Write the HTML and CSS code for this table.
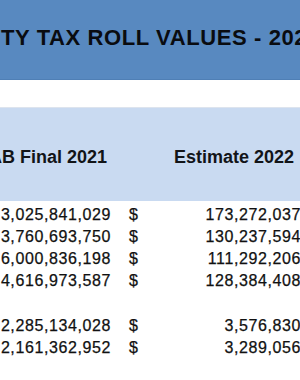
FILE: index.html
```html
<!DOCTYPE html>
<html lang="en">
<head>
<meta charset="utf-8">
<title>Tax Roll Values</title>
<link rel="stylesheet" href="styles.css">
</head>
<body>
<div class="sheet">
  <div class="title-band">
    <h1 class="title">TY TAX ROLL VALUES - 2022</h1>
  </div>
  <div class="head-band cols">
    <div class="hcell hb">AB Final 2021</div>
    <div></div>
    <div class="hcell hc">Estimate 2022</div>
  </div>
  <div class="rows">
    <div class="cols row"><span class="num">3,025,841,029</span><span class="cur">$</span><span class="num">173,272,037</span></div>
    <div class="cols row"><span class="num">3,760,693,750</span><span class="cur">$</span><span class="num">130,237,594</span></div>
    <div class="cols row"><span class="num">6,000,836,198</span><span class="cur">$</span><span class="num">111,292,206</span></div>
    <div class="cols row"><span class="num">4,616,973,587</span><span class="cur">$</span><span class="num">128,384,408</span></div>
    <div class="spacer"></div>
    <div class="cols row"><span class="num">2,285,134,028</span><span class="cur">$</span><span class="num">3,576,830</span></div>
    <div class="cols row"><span class="num">2,161,362,952</span><span class="cur">$</span><span class="num">3,289,056</span></div>
  </div>
</div>
</body>
</html>
```
FILE: styles.css
```css
html, body {
  margin: 0;
  padding: 0;
  overflow: hidden;
  background: #ffffff;
}
body {
  width: 300px;
  height: 380px;
  font-family: "Liberation Sans", Arial, sans-serif;
  color: #111111;
}
.sheet {
  width: 301px;
}
.title-band {
  height: 79px;
  background: #5889c0;
  border-bottom: 1px solid #4f7fb5;
  overflow: hidden;
  white-space: nowrap;
}
.title {
  margin: 0;
  padding: 25px 0 0 1px;
  font-size: 22px;
  line-height: 26px;
  font-weight: bold;
  letter-spacing: 0.6px;
  color: #0a0c10;
}
.cols {
  display: grid;
  grid-template-columns: 111px 38px 152px;
  align-items: start;
}
.head-band {
  margin-top: 27px;
  height: 94px;
  background: #c9daf1;
  border-top: 1px solid #dde4ee;
  box-sizing: border-box;
  padding-top: 38px;
}
.hcell {
  font-size: 18px;
  line-height: 22px;
  font-weight: bold;
  white-space: nowrap;
  justify-self: end;
  color: #121418;
}
.hb { margin-right: 4px; }
.hc { margin-right: 7px; }
.rows {
  padding-top: 3px;
}
.row {
  height: 22px;
  font-size: 16px;
  line-height: 22px;
  letter-spacing: 0.6px;
  white-space: nowrap;
  -webkit-text-stroke: 0.25px #111111;
}
.num {
  justify-self: end;
}
.cur {
  padding-left: 18px;
}
.spacer {
  height: 23px;
}
```
